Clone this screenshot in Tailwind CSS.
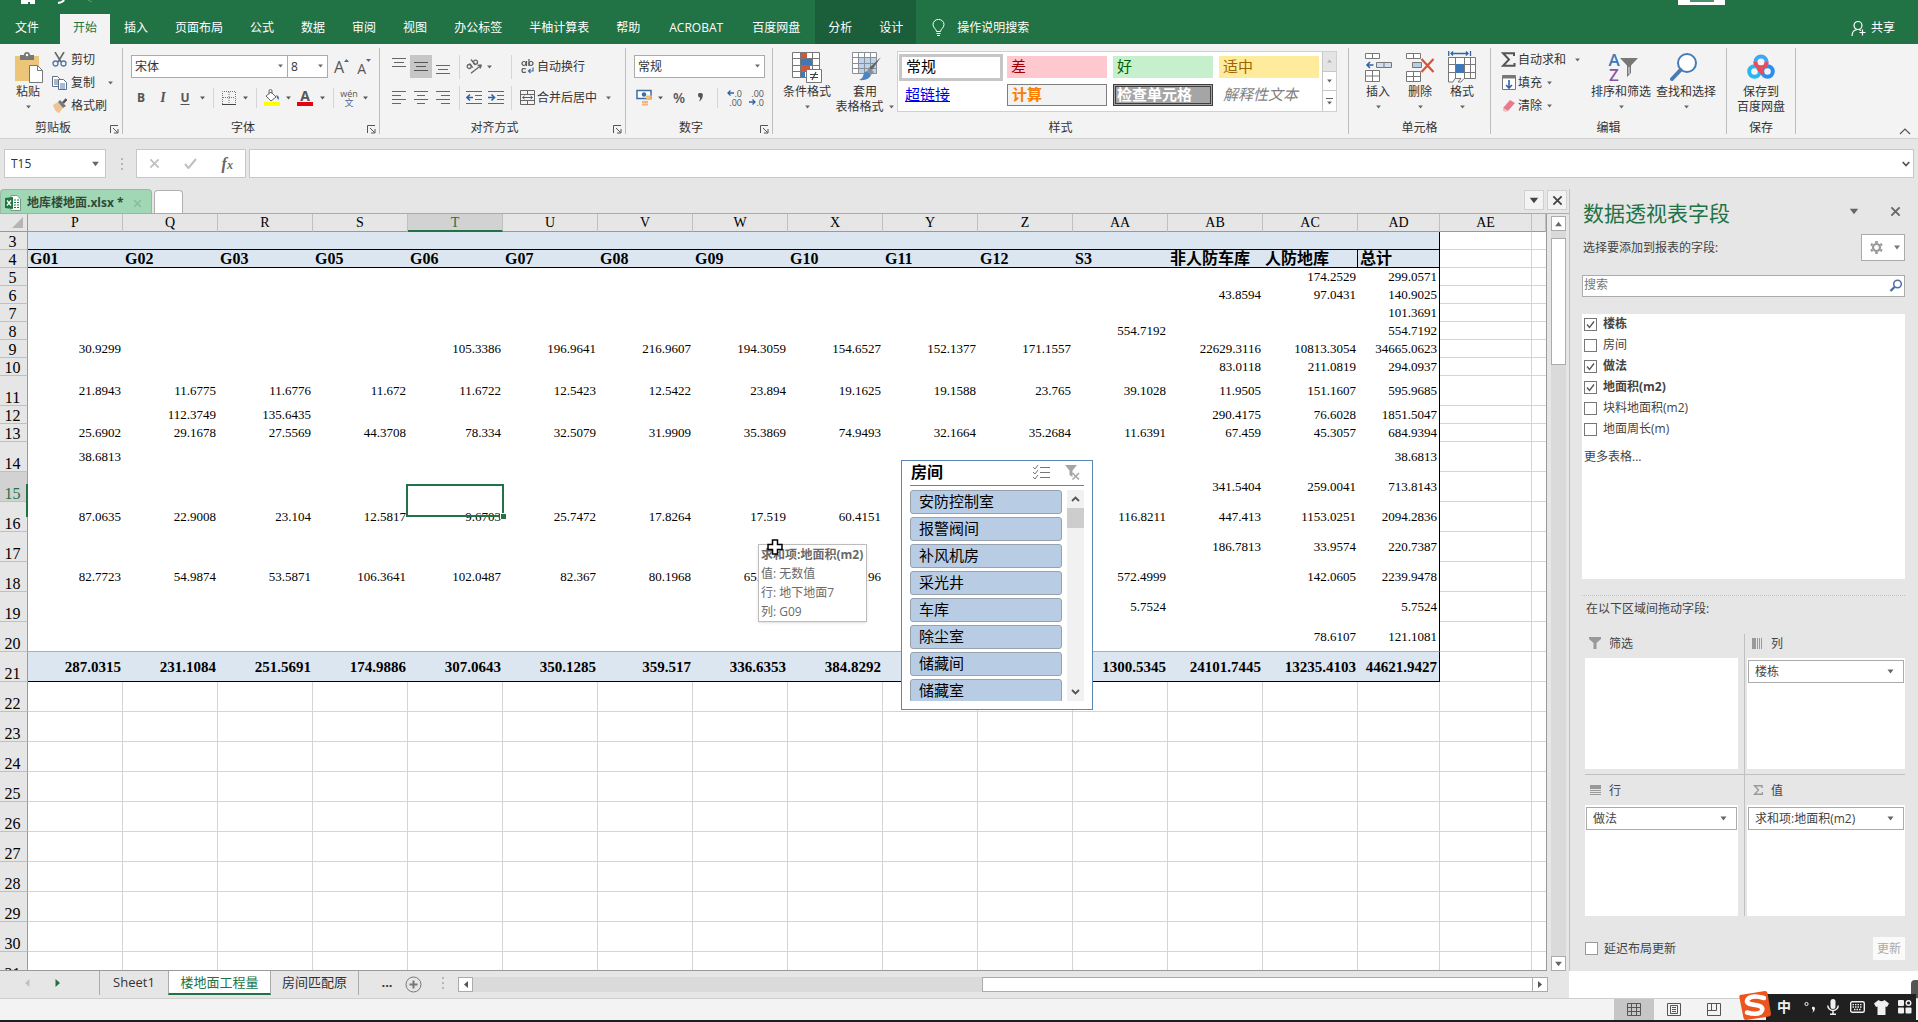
<!DOCTYPE html>
<html lang="zh-CN">
<head>
<meta charset="utf-8">
<meta name="viewport" content="width=device-width, initial-scale=1">
<title>地库楼地面.xlsx - Excel</title>
<script src="https://cdn.jsdelivr.net/npm/@tailwindcss/browser@4"></script>
</head>
<body class="flex h-screen flex-col overflow-hidden bg-[#e6e6e6] font-['Open_Sans','Noto_Sans_CJK_SC',sans-serif] text-xs leading-4 text-[#333]">

<!-- Shared symbols -->
<svg width="0" height="0" class="absolute" aria-hidden="true">
  <symbol id="caret" viewBox="0 0 8 5"><path d="M1 0.5h6L4 4.5z" fill="currentColor"/></symbol>
  <symbol id="launch" viewBox="0 0 9 9"><path d="M.5 8V.5H8M3 3l4.5 4.5M8 4v4H4" fill="none" stroke="#555"/></symbol>
  <symbol id="close" viewBox="0 0 12 12"><path d="M1.5 1.5l9 9M10.5 1.5l-9 9" fill="none" stroke="currentColor" stroke-width="2"/></symbol>
</svg>

<!-- Title strip and ribbon tabs -->
<header class="relative flex h-11 shrink-0 items-end overflow-hidden bg-[#217346] text-white">
  <svg class="absolute left-5 top-0" width="80" height="5" viewBox="0 0 80 5"><path d="M1 0h14v4H10V2H8v2H1z" fill="#fff"/><path d="M44 0q-1 2-6 3" stroke="#fff" stroke-width="2" fill="none"/><path d="M68 0l4 2" stroke="#5c9a78"/></svg>
  <div class="absolute right-[193px] top-0 h-[5px] w-[47px] overflow-hidden bg-white"><div class="mx-auto h-[2px] w-6 bg-[#4f8f6c]"></div></div>
  <nav class="flex h-[30px] gap-px whitespace-nowrap pl-[2px]">
    <button class="mr-[7px] px-[13px] pb-[2px]">文件</button>
    <button class="bg-[#f3f3f3] px-[13px] pb-[2px] text-[#217346]">开始</button>
    <button class="px-[13px] pb-[2px]">插入</button>
    <button class="px-[13px] pb-[2px]">页面布局</button>
    <button class="px-[13px] pb-[2px]">公式</button>
    <button class="px-[13px] pb-[2px]">数据</button>
    <button class="px-[13px] pb-[2px]">审阅</button>
    <button class="px-[13px] pb-[2px]">视图</button>
    <button class="px-[13px] pb-[2px]">办公标签</button>
    <button class="px-[13px] pb-[2px]">半柚计算表</button>
    <button class="px-[13px] pb-[2px]">帮助</button>
    <button class="w-[84px] pb-[2px]">ACROBAT</button>
    <button class="px-[13px] pb-[2px]">百度网盘</button>
  </nav>
  <div class="ml-[2px] flex h-11 items-end gap-px whitespace-nowrap bg-[#1b5e3a]">
    <button class="h-[30px] px-[13px] pb-[2px]">分析</button>
    <button class="h-[30px] px-[13px] pb-[2px]">设计</button>
  </div>
  <button class="ml-4 flex h-[30px] items-center gap-3 whitespace-nowrap pb-[2px]">
    <svg width="13" height="18" viewBox="0 0 13 18" fill="none" stroke="#fff"><path d="M4.500 12.500c0-2.500-3.500-3.500-3.500-7a5.400 5 0 0 1 11 0c0 3.500-3.500 4.500-3.500 7zM4.500 14.500h4M5 16.500h3"/></svg>
    操作说明搜索
  </button>
  <button class="ml-auto mr-[23px] flex h-[30px] items-center gap-1 whitespace-nowrap pb-[2px]">
    <svg width="16" height="17" viewBox="0 0 16 17" fill="none" stroke="#fff" stroke-width="1.200"><circle cx="7" cy="5.500" r="4"/><path d="M1 16c0-4 2-6 5-6.500M8 9.500l2 1M11.500 9.500v6M8.500 12.500h6"/></svg>
    共享
  </button>
</header>

<!-- Ribbon -->
<section class="relative flex h-[95px] shrink-0 whitespace-nowrap border-b border-[#cfcfcf] bg-[#f3f3f3] pt-1 text-[#333]">
  <!-- Clipboard -->
  <div class="relative mb-1 flex w-[123px] shrink-0 flex-col border-r border-[#bdbdbd]">
    <div class="flex h-[71px]">
      <button class="ml-1 flex w-12 flex-col items-center pt-[2px]">
        <span class="flex h-[34px] items-center"><svg width="29" height="33" viewBox="0 0 29 33"><path d="M1 5h24v25H1z" fill="#ecc578"/><path d="M6 4h4a3 3 0 0 1 6 0h4v5H6z" fill="#777"/><circle cx="13" cy="4" r="1.200" fill="#fff"/><path d="M15.500 14.500h8l5 5v12h-13z" fill="#fff" stroke="#777"/><path d="M23.500 14.500v5h5" fill="none" stroke="#777"/></svg></span>
        <span class="leading-[15px]">粘贴</span>
        <svg class="mt-[6px] text-[#666]" width="7" height="4"><use href="#caret"/></svg>
      </button>
      <div class="flex flex-col">
        <button class="flex h-[23px] items-center gap-1"><svg width="15" height="15" viewBox="0 0 15 15" fill="none"><path d="M3 0l6 10M12 0L6 10" stroke="#666" stroke-width="1.600"/><circle cx="3.500" cy="11.500" r="2.500" stroke="#4a78b0" stroke-width="1.300"/><circle cx="11.500" cy="11.500" r="2.500" stroke="#4a78b0" stroke-width="1.300"/></svg>剪切</button>
        <button class="flex h-[23px] items-center gap-1"><svg width="15" height="14" viewBox="0 0 15 14" fill="#fff" stroke="#5b6f8a"><path d="M.5.5h5l2 2v8h-7z"/><path d="M2 4h4M2 6h4M2 8h4"/><path d="M6.500 3.500h5l3 3v7h-8z"/><path d="M8 8h5M8 10h5M8 12h5" stroke="#4a78b0"/></svg>复制<svg class="ml-2 text-[#666]" width="7" height="4"><use href="#caret"/></svg></button>
        <button class="flex h-[23px] items-center gap-1"><svg width="15" height="15" viewBox="0 0 15 15"><path d="M1 7l5-3 5 6-4 5q-4-1-6-8z" fill="#ecc592"/><path d="M6 4l2-2 6 6-3 2z" fill="#777"/><path d="M11 5l3.500-4" stroke="#555" stroke-width="2.500"/></svg>格式刷</button>
      </div>
    </div>
    <div class="-mb-[2px] mt-auto pr-4 text-center">剪贴板</div>
    <svg class="absolute bottom-0 right-[3px]" width="9" height="9"><use href="#launch"/></svg>
  </div>

  <!-- Font -->
  <div class="relative mb-1 flex w-[257px] shrink-0 flex-col border-r border-[#bdbdbd]">
    <div class="flex h-[71px] flex-col gap-2 pt-[7px]">
      <div class="flex h-[23px] pl-2">
        <div class="relative"><select aria-label="字体" class="h-[23px] w-[157px] appearance-none border border-[#ababab] bg-white pl-[3px]"><option>宋体</option></select><svg class="pointer-events-none absolute right-1 top-[9px] text-[#666]" width="7" height="4"><use href="#caret"/></svg></div>
        <div class="relative"><select aria-label="字号" class="h-[23px] w-10 appearance-none border border-l-0 border-[#ababab] bg-white pl-[3px]"><option>8</option></select><svg class="pointer-events-none absolute right-1 top-[9px] text-[#666]" width="7" height="4"><use href="#caret"/></svg></div>
        <button class="ml-1.5 flex items-center text-base leading-none text-[#555]" aria-label="增大字号">A<svg class="-mt-3" width="5" height="3" viewBox="0 0 5 3"><path d="M0 3h5L2.500 0z" fill="#4a6a94"/></svg></button>
        <button class="ml-2 flex items-center pt-1 text-sm leading-none text-[#555]" aria-label="减小字号">A<svg class="-mt-4" width="5" height="3" viewBox="0 0 5 3"><path d="M0 0h5L2.500 3z" fill="#4a6a94"/></svg></button>
      </div>
      <div class="flex h-[23px] items-center pl-[7px] text-[#555]">
        <button class="w-[22px] font-bold">B</button>
        <button class="w-[22px] font-['Liberation_Serif',serif] text-sm font-bold italic">I</button>
        <button class="w-[22px] font-bold underline underline-offset-2">U</button>
        <span class="flex w-3 justify-center"><svg width="7" height="4"><use href="#caret"/></svg></span>
        <i class="mx-[5px] h-5 w-px bg-[#d5d5d5]"></i>
        <button class="flex w-5 justify-center" aria-label="边框"><svg width="14" height="14" viewBox="0 0 14 14" fill="none" stroke="#777" stroke-dasharray="1 1"><path d="M.5 13V.5h13V13M7 1v12M1 6.500h12"/><path d="M0 13.500h14" stroke="#444" stroke-dasharray="none"/></svg></button>
        <span class="flex w-3 justify-center"><svg width="7" height="4"><use href="#caret"/></svg></span>
        <i class="mx-[5px] h-5 w-px bg-[#d5d5d5]"></i>
        <button class="flex w-5 justify-center" aria-label="填充颜色"><svg width="16" height="17" viewBox="0 0 16 17"><path d="M2 7l5-4 5 5-5 4z" fill="#fff" stroke="#666"/><path d="M5 5V2a1.500 1.500 0 0 1 3 0v3" fill="none" stroke="#666"/><path d="M12 6q4 1 2.500 5Q13 10 12 6z" fill="#3f6ca6"/><path d="M0 13h16v4H0z" fill="#ff0"/></svg></button>
        <span class="flex w-3 justify-center"><svg width="7" height="4"><use href="#caret"/></svg></span>
        <button class="flex w-[22px] flex-col items-center" aria-label="字体颜色"><span class="text-sm font-bold leading-[13px]">A</span><span class="h-1 w-4 bg-[#e60012]"></span></button>
        <span class="flex w-3 justify-center"><svg width="7" height="4"><use href="#caret"/></svg></span>
        <i class="mx-[5px] h-5 w-px bg-[#d5d5d5]"></i>
        <button class="flex w-5 flex-col items-center text-[9px] leading-[9px]"><span>wén</span><span class="text-[#4a6fa8]">文</span></button>
        <span class="flex w-3 justify-center"><svg width="7" height="4"><use href="#caret"/></svg></span>
      </div>
    </div>
    <div class="-mb-[2px] mt-auto pr-4 text-center">字体</div>
    <svg class="absolute bottom-0 right-[3px]" width="9" height="9"><use href="#launch"/></svg>
  </div>

  <!-- Alignment -->
  <div class="relative mb-1 flex w-[246px] shrink-0 flex-col border-r border-[#bdbdbd]">
    <div class="flex h-[71px] flex-col gap-2 pt-[7px]">
      <div class="flex h-[23px] items-center pl-2">
        <button class="flex h-[23px] w-[22px] justify-center pt-[3px]" aria-label="顶端对齐"><svg width="14" height="9" viewBox="0 0 14 9" stroke="#666"><path d="M0 .5h14M2 4.500h10M0 8.500h14"/></svg></button>
        <button class="flex h-[23px] w-[22px] items-center justify-center bg-[#c6c6c6]" aria-label="垂直居中"><svg width="14" height="9" viewBox="0 0 14 9" stroke="#555"><path d="M0 .5h14M2 4.500h10M0 8.500h14"/></svg></button>
        <button class="flex h-[23px] w-[22px] items-end justify-center pb-1" aria-label="底端对齐"><svg width="14" height="9" viewBox="0 0 14 9" stroke="#666"><path d="M0 .5h14M2 4.500h10M0 8.500h14"/></svg></button>
        <i class="mx-[5px] h-6 w-px bg-[#d5d5d5]"></i>
        <button class="flex w-[18px] justify-center" aria-label="方向"><svg width="17" height="15" viewBox="0 0 17 15" fill="none" stroke="#666" stroke-width="1.300"><path d="M5 14.300L15.500 6M15.500 6l-4 .3M15.500 6l-1.500 3.600"/><circle cx="3.200" cy="7.500" r="2"/><path d="M3.500 4.500l3.300 4.200"/><path d="M5 .5l4.500 5.500"/><circle cx="9.500" cy="3.200" r="2"/></svg></button>
        <span class="flex w-3 justify-center text-[#666]"><svg width="7" height="4"><use href="#caret"/></svg></span>
        <i class="ml-4 mr-[5px] h-6 w-px bg-[#d5d5d5]"></i>
        <button class="flex items-center"><span class="flex w-5 justify-center"><svg width="13" height="15" viewBox="0 0 13 15" fill="none" stroke="#555" stroke-width="1.200"><circle cx="3" cy="4.500" r="2"/><path d="M5.500 2v5M8 0v7"/><circle cx="10" cy="4.500" r="2"/><path d="M5 10q-4-1.500-4 1.500T5 13"/><path d="M12 8.500v3.500H8M9.500 10l-2 2 2 2" stroke="#3f6ca6"/></svg></span>自动换行</button>
      </div>
      <div class="flex h-[23px] items-center pl-2">
        <button class="flex w-[22px] justify-center" aria-label="左对齐"><svg width="14" height="13" viewBox="0 0 14 13" stroke="#666"><path d="M0 .5h14M0 4.500h9M0 8.500h14M0 12.500h9"/></svg></button>
        <button class="flex w-[22px] justify-center" aria-label="居中"><svg width="14" height="13" viewBox="0 0 14 13" stroke="#666"><path d="M0 .5h14M3 4.500h8M0 8.500h14M3 12.500h8"/></svg></button>
        <button class="flex w-[22px] justify-center" aria-label="右对齐"><svg width="14" height="13" viewBox="0 0 14 13" stroke="#666"><path d="M0 .5h14M5 4.500h9M0 8.500h14M5 12.500h9"/></svg></button>
        <i class="mx-[5px] h-6 w-px bg-[#d5d5d5]"></i>
        <button class="flex w-[18px] justify-center" aria-label="减少缩进"><svg width="16" height="13" viewBox="0 0 16 13" stroke="#666" fill="none"><path d="M0 .5h16M9 4.500h7M9 8.500h7M0 12.500h16"/><path d="M7 6.500H1M4 3.500l-3 3 3 3" stroke="#2f65a8" stroke-width="1.600"/></svg></button>
        <button class="ml-1 flex w-[18px] justify-center" aria-label="增加缩进"><svg width="16" height="13" viewBox="0 0 16 13" stroke="#666" fill="none"><path d="M0 .5h16M9 4.500h7M9 8.500h7M0 12.500h16"/><path d="M0 6.500h6M3.500 3.500l3 3-3 3" stroke="#2f65a8" stroke-width="1.600"/></svg></button>
        <i class="ml-1.5 mr-[5px] h-6 w-px bg-[#d5d5d5]"></i>
        <button class="flex items-center"><span class="flex w-5 justify-center"><svg width="15" height="15" viewBox="0 0 15 15" fill="none" stroke="#666"><path d="M.5.5h14v14H.5zM.5 4.500h14M.5 10.500h14M7.500.5v4M7.500 10.500v4"/><path d="M2.500 7.500h10M4.500 5.800L2.500 7.500l2 1.700M10.500 5.800l2 1.700-2 1.700" stroke="#2f65a8"/></svg></span>合并后居中<svg class="ml-2 text-[#666]" width="7" height="4"><use href="#caret"/></svg></button>
      </div>
    </div>
    <div class="-mb-[2px] mt-auto pr-4 text-center">对齐方式</div>
    <svg class="absolute bottom-0 right-[3px]" width="9" height="9"><use href="#launch"/></svg>
  </div>

  <!-- Number -->
  <div class="relative mb-1 flex w-[147px] shrink-0 flex-col border-r border-[#bdbdbd]">
    <div class="flex h-[71px] flex-col gap-2 pt-[7px]">
      <div class="relative ml-2 w-[131px]"><select aria-label="数字格式" class="h-[23px] w-full appearance-none border border-[#ababab] bg-white pl-[3px]"><option>常规</option></select><svg class="pointer-events-none absolute right-1 top-[9px] text-[#666]" width="7" height="4"><use href="#caret"/></svg></div>
      <div class="flex h-[23px] items-center pl-[10px] text-[#555]">
        <button class="w-[18px]" aria-label="会计数字格式"><svg width="18" height="17" viewBox="0 0 18 17"><path d="M1 1.500h14v8H1z" fill="#fff" stroke="#3f6ca6" stroke-width="1.500"/><circle cx="8" cy="5.500" r="2.200" fill="#3f6ca6"/><path d="M10 7.500h6M10 10h6M6 13h6M6 15.500h6" stroke="#edb77a" stroke-width="2"/></svg></button>
        <span class="flex w-3 justify-center"><svg width="7" height="4"><use href="#caret"/></svg></span>
        <button class="ml-1 w-[18px] text-sm font-semibold">%</button>
        <button class="ml-1 flex w-[17px] justify-center" aria-label="千位分隔样式"><svg width="5" height="9" viewBox="0 0 5 9"><path d="M0 1.500a2.300 2 0 0 1 4.800 1Q4.500 6.500 1 8.500 2.500 6 2 4.500 0 4.500 0 1.500z" fill="#555"/></svg></button>
        <i class="ml-2 mr-1.5 h-5 w-px bg-[#d5d5d5]"></i>
        <button class="flex w-[18px] flex-col text-[9px] leading-[9px]" aria-label="增加小数位数"><span class="flex items-center justify-end"><svg width="7" height="6" viewBox="0 0 7 6"><path d="M7 3H1M3.500.5L1 3l2.500 2.500" stroke="#2f65a8" fill="none" stroke-width="1.300"/></svg>.0</span><span class="text-right">.00</span></button>
        <button class="ml-1 flex w-[18px] flex-col text-[9px] leading-[9px]" aria-label="减少小数位数"><span class="text-right">.00</span><span class="flex items-center justify-end"><svg width="7" height="6" viewBox="0 0 7 6"><path d="M0 3h6M3.500.5L6 3 3.500 5.500" stroke="#2f65a8" fill="none" stroke-width="1.300"/></svg>.0</span></button>
      </div>
    </div>
    <div class="-mb-[2px] mt-auto pr-4 text-center">数字</div>
    <svg class="absolute bottom-0 right-[3px]" width="9" height="9"><use href="#launch"/></svg>
  </div>

  <!-- Styles -->
  <div class="mb-1 flex w-[576px] shrink-0 flex-col border-r border-[#bdbdbd]">
    <div class="flex h-[71px] pl-[6px]">
      <button class="flex w-14 flex-col items-center pt-[2px] leading-[15px]">
        <span class="flex h-[34px] items-center"><svg width="30" height="31" viewBox="0 0 30 31"><path d="M.5.5h27v25H.5zM8.500.5v25M20.500.5v25M.5 6.500h27M.5 13.500h27M.5 19.500h27" fill="#fff" stroke="#777"/><path d="M9 1h6v5H9zM9 14h9v5H9z" fill="#d4553a"/><path d="M9 7h11v6H9zM9 20h4v5H9z" fill="#3f78b8"/><path d="M14.500 17.500h15v13h-15z" fill="#fff" stroke="#777"/><path d="M18 22.500h8M18 25.500h8M24 20l-4 8" stroke="#444" stroke-width="1.200"/></svg></span>
        条件格式
        <svg class="mt-[6px] text-[#666]" width="7" height="4"><use href="#caret"/></svg>
      </button>
      <button class="flex w-[60px] flex-col items-center pt-[2px] leading-[15px]">
        <span class="flex h-[34px] items-center pl-1"><svg width="30" height="30" viewBox="0 0 30 30"><path d="M.5.5h24v21H.5z" fill="#fff"/><path d="M7 6h18v16H7z" fill="#bcd3ea"/><path d="M.5.5h24v21H.5zM6.500.5v21M12.500.5v21M18.500.5v21M.5 5.500h24M.5 11.500h24M.5 16.500h24" fill="none" stroke="#8a8f96"/><path d="M29 5l-9 13-3-2z" fill="#666"/><path d="M17 16l5 4-3 3-4-4z" fill="#8a8f96"/><path d="M15 19l4 4q-2 6-12 5 4-2 4-4 1-4 4-5z" fill="#4a86c5"/></svg></span>
        <span>套用</span>
        <span class="flex items-center gap-1">表格格式<svg class="text-[#666]" width="7" height="4"><use href="#caret"/></svg></span>
      </button>
      <div class="ml-[2px] mt-[3px] flex h-[61px] w-[440px] border border-[#d0d0d0] bg-white text-[15px] leading-5">
        <div class="grid flex-1 auto-rows-[28px] grid-cols-4 items-center pt-px text-left">
          <button class="mx-px flex h-[27px] items-center border-[3px] border-[#c6c6c6] pb-[3px] pl-1 text-black">常规</button>
          <button class="mx-[3px] flex h-[22px] items-center bg-[#ffc7ce] pb-[3px] pl-1 text-[#9c0006]">差</button>
          <button class="mx-[3px] flex h-[22px] items-center bg-[#c6efce] pb-[3px] pl-1 text-[#006100]">好</button>
          <button class="mx-[3px] flex h-[22px] items-center bg-[#ffeb9c] pb-[3px] pl-1 text-[#9c6500]">适中</button>
          <button class="mx-[3px] flex h-[22px] items-center pb-[3px] pl-1 text-[#0000ee] underline">超链接</button>
          <button class="mx-[3px] flex h-[22px] items-center border border-[#7f7f7f] bg-[#f2f2f2] pb-[3px] pl-1 font-bold text-[#fa7d00]">计算</button>
          <button class="mx-[3px] flex h-[22px] items-center border-[3px] border-double border-[#3f3f3f] bg-[#a5a5a5] pb-[3px] pl-px font-bold text-white">检查单元格</button>
          <button class="mx-[3px] flex h-[22px] items-center pb-[3px] pl-1 italic text-[#7f7f7f]">解释性文本</button>
        </div>
        <div class="grid w-[14px] grid-rows-3 divide-y divide-[#c6c6c6] border-l border-[#c6c6c6] text-[#666]">
          <button class="flex items-center justify-center bg-[#e4e4e4] text-[#b0b0b0]" aria-label="上一行"><svg class="rotate-180" width="7" height="4"><use href="#caret"/></svg></button>
          <button class="flex items-center justify-center" aria-label="下一行"><svg width="7" height="4"><use href="#caret"/></svg></button>
          <button class="flex flex-col items-center justify-center gap-0.5" aria-label="其他"><i class="h-px w-[7px] bg-[#666]"></i><svg width="7" height="4"><use href="#caret"/></svg></button>
        </div>
      </div>
    </div>
    <div class="-mb-[2px] mt-auto text-center">样式</div>
  </div>

  <!-- Cells -->
  <div class="mb-1 flex w-[142px] shrink-0 flex-col border-r border-[#bdbdbd]">
    <div class="flex h-[71px] pl-2 leading-[15px]">
      <button class="flex w-[42px] flex-col items-center pt-[2px]">
        <span class="flex h-[34px] items-center"><svg width="27" height="29" viewBox="0 0 27 29" fill="#fff" stroke="#777"><path d="M.5.5h14v5H.5zM7.500.5v5M.5 17.500h14v11H.5zM7.500 17.500v11M.5 23h14"/><path d="M11.500 9.500h15v5h-15zM19 9.500v5" fill="#cfdfee"/><path d="M8.500 12H2M5 9l-3 3 3 3" fill="none" stroke="#2f65a8" stroke-width="1.600"/></svg></span>
        插入<svg class="mt-[6px] text-[#666]" width="7" height="4"><use href="#caret"/></svg>
      </button>
      <button class="flex w-[42px] flex-col items-center pt-[2px]">
        <span class="flex h-[34px] items-center"><svg width="29" height="29" viewBox="0 0 29 29" fill="#fff" stroke="#777"><path d="M.5.5h14v5H.5zM7.500.5v5M.5 18.500h14v10H.5zM7.500 18.500v10M.5 23.500h14"/><path d="M6.500 9.500h9v5h-9z" fill="#b7cfe6"/><path d="M15.500 6l12 13M27.500 6l-12 13" fill="none" stroke="#d4553a" stroke-width="2.200"/></svg></span>
        删除<svg class="mt-[6px] text-[#666]" width="7" height="4"><use href="#caret"/></svg>
      </button>
      <button class="flex w-[42px] flex-col items-center pt-[2px]">
        <span class="flex h-[34px] items-center"><svg width="28" height="32" viewBox="0 0 28 32" fill="#fff" stroke="#777"><path d="M.5 6.500h27v21H16l-3 3.500h-3l3-3.500H7l-2 3.500H.5z"/><path d="M7.500 6.500v21M16.500 6.500v21M22.500 6.500v21M.5 13.500h27M.5 21.500h27"/><path d="M8 13h8v9H8z" fill="#3f78b8" stroke="none"/><path d="M.7 0v5M22.500 0v5M3 2.500h17M5 .5l-2 2 2 2M18 .5l2 2-2 2" fill="none" stroke="#2f65a8" stroke-width="1.300"/></svg></span>
        格式<svg class="mt-[6px] text-[#666]" width="7" height="4"><use href="#caret"/></svg>
      </button>
    </div>
    <div class="-mb-[2px] mt-auto text-center">单元格</div>
  </div>

  <!-- Editing -->
  <div class="mb-1 flex w-[236px] shrink-0 flex-col border-r border-[#bdbdbd]">
    <div class="flex h-[71px] pl-2 leading-[15px]">
      <div class="flex w-[90px] flex-col">
        <button class="flex h-[23px] items-center"><span class="flex w-[19px] justify-center"><svg width="15" height="15" viewBox="0 0 15 15"><path d="M13 4V1.200H2L8 7.500 2 13.800h11.500V11" fill="none" stroke="#555" stroke-width="2"/></svg></span>自动求和<svg class="ml-2 text-[#666]" width="7" height="4"><use href="#caret"/></svg></button>
        <button class="flex h-[23px] items-center"><span class="flex w-[19px] justify-center"><svg width="14" height="15" viewBox="0 0 14 15" fill="#fff" stroke="#777"><path d="M.5.5h13v14H.5z"/><path d="M1 2h12" stroke-width="3"/><path d="M7 5v8M4 10l3 3 3-3" fill="none" stroke="#2f65a8" stroke-width="1.600"/></svg></span>填充<svg class="ml-1 text-[#666]" width="7" height="4"><use href="#caret"/></svg></button>
        <button class="flex h-[23px] items-center"><span class="flex w-[19px] justify-center"><svg width="14" height="14" viewBox="0 0 14 14"><path d="M1 9L8 1l5 3-7 8z" fill="#e87a8c"/><path d="M1 9l5 3-2 1-3-1z" fill="#f6bcc6"/></svg></span>清除<svg class="ml-1 text-[#666]" width="7" height="4"><use href="#caret"/></svg></button>
      </div>
      <button class="flex w-16 flex-col items-center pt-[2px]">
        <span class="flex h-[34px] items-center pl-1 text-[17px] font-semibold leading-[15px]"><span class="flex flex-col"><span class="text-[#3f78b8]">A</span><span class="text-[#8a55a8]">Z</span></span><svg width="18" height="20" viewBox="0 0 18 20"><path d="M0 1h18l-7 7.500V16l-4 4V8.500z" fill="#777"/><path d="M9 10v7" stroke="#f3f3f3"/></svg></span>
        排序和筛选<svg class="mt-[6px] text-[#666]" width="7" height="4"><use href="#caret"/></svg>
      </button>
      <button class="flex w-[66px] flex-col items-center pt-[2px]">
        <span class="flex h-[34px] items-center pr-1"><svg width="28" height="28" viewBox="0 0 28 28"><circle cx="17" cy="10" r="9" fill="#fff" stroke="#4a7ab5" stroke-width="2"/><path d="M10.500 17L2 26" stroke="#4a7ab5" stroke-width="4" stroke-linecap="round"/></svg></span>
        查找和选择<svg class="mt-[6px] text-[#666]" width="7" height="4"><use href="#caret"/></svg>
      </button>
    </div>
    <div class="-mb-[2px] mt-auto text-center">编辑</div>
  </div>

  <!-- Save -->
  <div class="mb-1 flex w-[69px] shrink-0 flex-col border-r border-[#bdbdbd]">
    <button class="flex h-[71px] flex-col items-center pt-[2px] leading-[15px]">
      <span class="flex h-[34px] items-center"><svg width="28" height="26" viewBox="0 0 28 26" fill="none" stroke-width="4"><circle cx="7.500" cy="17.500" r="5.300" stroke="#2ab7f0"/><circle cx="20.500" cy="17.500" r="5.300" stroke="#2a8df0"/><circle cx="14" cy="8" r="5.600" stroke="#3fa6f4"/><path d="M8.400 8a5.600 5.600 0 0 0 5.600 5.600A5.600 5.600 0 0 0 19.600 8M11 14l5 6" stroke="#ee4a5c"/></svg></span>
      <span>保存到</span><span>百度网盘</span>
    </button>
    <div class="-mb-[2px] mt-auto text-center">保存</div>
  </div>
  <button class="absolute bottom-[3px] right-[7px]" aria-label="折叠功能区"><svg width="12" height="7" viewBox="0 0 12 7"><path d="M1 6l5-5 5 5" fill="none" stroke="#555" stroke-width="1.200"/></svg></button>
</section>

<!-- Formula bar -->
<section class="flex h-[50px] shrink-0 items-start px-[4px] pt-[10px]">
  <div class="relative"><input aria-label="名称框" value="T15" class="h-[29px] w-[102px] border border-[#c8c8c8] bg-white pl-1.5"><svg class="absolute right-[6px] top-3 text-[#666]" width="9" height="6"><use href="#caret"/></svg></div>
  <div class="ml-[14px] flex h-[29px] w-[3px] flex-col items-center justify-center gap-[3px]"><i class="size-[2px] bg-[#b5b5b5]"></i><i class="size-[2px] bg-[#b5b5b5]"></i><i class="size-[2px] bg-[#b5b5b5]"></i></div>
  <div class="ml-[13px] flex h-[29px] w-[110px] items-center justify-around border border-[#c8c8c8] bg-white">
    <button class="text-[#c0c0c0]" aria-label="取消"><svg width="11" height="11"><use href="#close"/></svg></button>
    <button aria-label="输入"><svg width="13" height="11" viewBox="0 0 13 11"><path d="M1 6l3.500 4L12 1" fill="none" stroke="#c0c0c0" stroke-width="2"/></svg></button>
    <button class="font-['Liberation_Serif',serif] text-base font-bold italic text-[#666]">f<span class="text-xs">x</span></button>
  </div>
  <div class="relative ml-[3px] flex-1"><input aria-label="编辑栏" class="h-[29px] w-full border border-[#c8c8c8] bg-white px-1"><svg class="absolute right-1 top-3" width="8" height="6" viewBox="0 0 8 6"><path d="M.7 1L4 4.500 7.300 1" fill="none" stroke="#555" stroke-width="1.800"/></svg></div>
</section>

<main class="flex min-h-0 flex-1">
  <div class="flex min-w-0 flex-1 flex-col">
    <!-- Workbook tabs -->
    <div class="flex h-6 shrink-0 items-end">
      <button class="flex h-6 w-[152px] items-center rounded-t-[4px] border border-b-0 border-[#9bb8a6] bg-[#a0d8b6] pl-1 pt-[3px] font-bold text-[#2f4a3a]">
        <svg class="mr-1.5" width="16" height="16" viewBox="0 0 16 16"><path d="M6 .5h6l3.500 3.500v11.500H6z" fill="#fff" stroke="#7a9a88"/><path d="M9 5h5M9 7.500h5M9 10h5M9 12.500h5" stroke="#217346" stroke-dasharray="2 1"/><path d="M0 3l8-1v12l-8-1z" fill="#217346"/><path d="M2 5.500l4 5M6 5.500l-4 5" stroke="#fff" stroke-width="1.300"/></svg>
        地库楼地面.xlsx *<svg class="ml-[9px] text-[#8dbb9f]" width="9" height="9"><use href="#close"/></svg>
      </button>
      <button class="ml-[2px] h-[23px] w-[29px] rounded-t-[4px] border border-b-0 border-[#b0b0b0] bg-white" aria-label="新建标签"></button>
      <button class="mb-[3px] ml-auto flex h-5 w-5 items-center justify-center border border-[#d0d0d0] bg-[#f3f3f3] text-[#444]" aria-label="标签列表"><svg width="12" height="7"><use href="#caret"/></svg></button>
      <button class="mb-[3px] ml-[3px] mr-[2px] flex h-5 w-5 items-center justify-center border border-[#d0d0d0] bg-[#f3f3f3] text-[#444]" aria-label="关闭"><svg width="11" height="11"><use href="#close"/></svg></button>
    </div>

    <!-- Sheet -->
    <div class="flex min-h-0 flex-1 border-t border-[#ababab]">
      <div class="relative min-w-0 flex-1 overflow-hidden border-b border-r border-[#9a9a9a] bg-white">
        <table class="w-full min-w-[1546px] table-fixed border-separate border-spacing-0 bg-white font-['Liberation_Serif','Noto_Sans_CJK_SC',serif] text-black">
          <colgroup id="cols"></colgroup>
          <thead><tr id="head" class="h-[18px]"></tr></thead>
          <tbody id="grid"></tbody>
        </table>

        <!-- Active cell -->
        <div class="absolute left-[406px] top-[270px] h-[33px] w-[98px] border-2 border-[#217346]"><i class="absolute -bottom-[4px] -right-[4px] size-[6px] border-l border-t border-white bg-[#217346]"></i></div>
        <i class="absolute left-[26px] top-[270px] h-[33px] w-[2px] bg-[#217346]"></i>

        <!-- Cell tooltip -->
        <div class="absolute left-[758px] top-[330px] whitespace-nowrap border border-[#bdbdbd] bg-white pl-[2px] pr-[3px] leading-[19px] text-[#6a6a6a] shadow-sm">
          <div class="font-bold">求和项:地面积(m2)</div><div>值: 无数值</div><div>行: 地下地面7</div><div>列: G09</div>
        </div>
        <svg class="absolute left-[767px] top-[325px]" width="16" height="16" viewBox="0 0 16 16"><path d="M5.500 1h5v4.500H15v5h-4.500V15h-5v-4.500H1v-5h4.500z" fill="#fff" stroke="#000" stroke-width="1.500"/></svg>

        <!-- Slicer -->
        <div class="absolute left-[901px] top-[246px] h-[250px] w-[192px] border border-[#5b86b5] bg-white px-2 text-[15px] text-black">
          <div class="flex h-[25px] items-center border-b border-[#5b86b5] pb-[2px] pl-px text-base font-bold">
            <span>房间</span>
            <svg class="ml-auto" width="17" height="15" viewBox="0 0 17 15" fill="none" stroke="#777"><path d="M7 2.500h10M7 7.500h10M7 12.500h10"/><path d="M0 2l2 2 3-4M0 7l2 2 3-4M0 12l2 2 3-4"/></svg>
            <svg class="ml-[15px] mr-1" width="15" height="15" viewBox="0 0 15 15"><path d="M0 0h12L7.500 5.500V12L4.500 10V5.500z" fill="#a5a5a5"/><path d="M7.500 8l6.500 6.500M14 8l-6.500 6.500" stroke="#a5a5a5" stroke-width="1.500"/></svg>
          </div>
          <div class="mt-1 flex h-[211px] justify-between">
            <div id="slicer" class="flex w-[152px] flex-col gap-[3px] overflow-hidden"></div>
            <div class="flex w-[17px] flex-col items-center bg-[#f1f1f1]">
              <svg class="mt-1.5 shrink-0" width="9" height="6" viewBox="0 0 9 6"><path d="M1 5l3.500-3.500L8 5" fill="none" stroke="#555" stroke-width="1.800"/></svg>
              <i class="mt-1.5 h-5 w-full shrink-0 bg-[#cdcdcd]"></i>
              <svg class="mb-1.5 mt-auto shrink-0" width="9" height="6" viewBox="0 0 9 6"><path d="M1 1l3.500 3.500L8 1" fill="none" stroke="#555" stroke-width="1.800"/></svg>
            </div>
          </div>
        </div>
      </div>
      <!-- Vertical scroll bar -->
      <div class="flex w-[22px] flex-col items-center pt-[2px] text-[#666]">
        <button class="flex h-[15px] w-[15px] shrink-0 items-center justify-center border border-[#ababab] bg-white" aria-label="向上"><svg class="rotate-180" width="9" height="6"><use href="#caret"/></svg></button>
        <div class="w-[15px] flex-1 bg-[#dadada] pt-[7px]"><div class="h-[127px] border border-[#ababab] bg-white"></div></div>
        <button class="flex h-[15px] w-[15px] shrink-0 items-center justify-center border border-[#ababab] bg-white" aria-label="向下"><svg width="9" height="6"><use href="#caret"/></svg></button>
      </div>
    </div>

    <!-- Sheet tabs -->
    <div class="flex h-[27px] shrink-0 items-start text-[13px] leading-[22px]">
      <button class="ml-[25px] mt-2" aria-label="上一个"><svg width="5" height="8" viewBox="0 0 5 8"><path d="M4.500 0v8L0 4z" fill="#c0c0c0"/></svg></button>
      <button class="ml-[25px] mt-2" aria-label="下一个"><svg width="5" height="8" viewBox="0 0 5 8"><path d="M.5 0v8L5 4z" fill="#217346"/></svg></button>
      <button class="ml-[39px] h-6 w-[69px] border-l border-[#ababab] pb-[2px] text-center">Sheet1</button>
      <button class="-mt-px h-[25px] w-[103px] border-x border-b-2 border-x-[#ababab] border-b-[#217346] bg-white text-[#217346]">楼地面工程量</button>
      <button class="h-6 w-[88px] border-r border-[#ababab] pb-[2px]">房间匹配原</button>
      <button class="ml-[22px] w-3 font-bold" aria-label="更多工作表">...</button>
      <button class="ml-[12px] mt-[5px]" aria-label="新工作表"><svg width="17" height="17" viewBox="0 0 17 17" fill="none" stroke="#777"><circle cx="8.500" cy="8.500" r="7.500"/><path d="M4.500 8.500h8M8.500 4.500v8" stroke-width="2"/></svg></button>
      <div class="ml-5 mt-[6px] flex flex-col gap-[3px]"><i class="size-[2px] bg-[#b5b5b5]"></i><i class="size-[2px] bg-[#b5b5b5]"></i><i class="size-[2px] bg-[#b5b5b5]"></i></div>
      <div class="ml-[14px] mr-[21px] mt-[6px] flex h-[15px] flex-1">
        <button class="flex w-[15px] items-center justify-center border border-[#ababab] bg-white" aria-label="向左"><svg width="4" height="7" viewBox="0 0 4 7"><path d="M4 0v7L0 3.500z" fill="#555"/></svg></button>
        <div class="flex flex-1 justify-end bg-[#dadada]"><div class="h-full w-[52%] border border-[#ababab] bg-white"></div></div>
        <button class="flex w-[15px] items-center justify-center border border-l-0 border-[#ababab] bg-white" aria-label="向右"><svg width="4" height="7" viewBox="0 0 4 7"><path d="M0 0v7l4-3.500z" fill="#555"/></svg></button>
      </div>
    </div>
  </div>

  <!-- PivotTable fields pane -->
  <aside class="flex w-[349px] shrink-0 flex-col">
    <div class="flex min-h-0 flex-1 flex-col border-l border-[#c0c0c0] pl-3 pr-[13px] text-[#444]">
      <div class="mt-[9px] flex h-[30px] shrink-0 items-center">
        <h2 class="pl-px text-[21px] leading-[30px] text-[#217346]">数据透视表字段</h2>
        <svg class="-mt-1 ml-auto text-[#666]" width="12" height="7"><use href="#caret"/></svg>
        <button class="-mt-1 ml-[30px] mr-1 text-[#666]" aria-label="关闭窗格"><svg width="11" height="11"><use href="#close"/></svg></button>
      </div>
      <div class="mt-[6px] flex h-[27px] shrink-0 items-center justify-between">
        <span class="pl-px">选择要添加到报表的字段:</span>
        <button class="flex h-[27px] w-11 items-center justify-center gap-2.5 border border-[#ababab] bg-white pl-1 text-[#777]" aria-label="工具"><svg width="13" height="13" viewBox="0 0 13 13" fill="none" stroke="#999"><circle cx="6.500" cy="6.500" r="3.500" stroke-width="2.200"/><path d="M6.500 0v2M6.500 11v2M0.900 3.200l1.700 1M10.400 8.800l1.700 1M.9 9.800l1.700-1M10.400 4.200l1.700-1" stroke-width="2.600"/></svg><svg width="8" height="5"><use href="#caret"/></svg></button>
      </div>
      <div class="relative mt-[14px] shrink-0"><input aria-label="搜索" placeholder="搜索" class="block h-[22px] w-full border border-[#ababab] bg-white pb-[3px] pl-px placeholder:text-[#777]"><svg class="absolute right-[2px] top-1" width="14" height="14" viewBox="0 0 14 14" fill="none" stroke="#4a6fa8"><circle cx="8.500" cy="5" r="3.800" stroke-width="1.500"/><path d="M5.500 8L1.500 12" stroke-width="2.400"/></svg></div>
      <div id="fields" class="mt-[17px] min-h-0 flex-1 overflow-hidden bg-white pl-[2px] pt-px"></div>
      <hr class="mt-4 shrink-0 border-dotted border-[#c0c0c0]">
      <div class="mt-[5px] shrink-0 pl-1">在以下区域间拖动字段:</div>
      <div class="ml-[3px] mt-[17px] grid shrink-0 grid-cols-2">
        <section class="flex h-[141px] flex-col border-b border-r border-[#c0c0c0] pr-1.5">
          <h3 class="flex h-6 items-center gap-2 pb-1 pl-1"><svg class="-mt-[2px]" width="12" height="12" viewBox="0 0 12 12"><path d="M0 0h12v2L7.500 6v6h-3V6L0 2z" fill="#999"/></svg>筛选</h3>
          <div class="h-[111px] bg-white"></div>
        </section>
        <section class="flex h-[141px] flex-col border-b border-[#c0c0c0] pl-[2px]">
          <h3 class="flex h-6 items-center gap-[9px] pb-1 pl-[5px]"><svg class="-mt-[2px]" width="10" height="11" viewBox="0 0 10 11"><path d="M0 0h4v11H0zM5 0h1v11H5zM7 0h1v11H7zM9 0h1v11H9z" fill="#999"/></svg>列</h3>
          <div class="h-[111px] bg-white px-px pt-[2px]"><div class="relative"><select aria-label="列字段" class="block h-[23px] w-full appearance-none border border-[#ababab] bg-white pl-1.5"><option>楼栋</option></select><svg class="pointer-events-none absolute right-[9px] top-[9px] text-[#666]" width="9" height="5"><use href="#caret"/></svg></div></div>
        </section>
        <section class="flex h-[141px] flex-col border-r border-[#c0c0c0] pr-1.5 pt-[6px]">
          <h3 class="flex h-6 items-center gap-2 pb-1 pl-[5px]"><svg class="-mt-[2px]" width="11" height="10" viewBox="0 0 11 10"><path d="M0 0h11v4H0zM0 5h11v1H0zM0 7h11v1H0zM0 9h11v1H0z" fill="#999"/></svg>行</h3>
          <div class="h-[111px] bg-white px-px pt-[2px]"><div class="relative"><select aria-label="行字段" class="block h-[23px] w-full appearance-none border border-[#ababab] bg-white pl-1.5"><option>做法</option></select><svg class="pointer-events-none absolute right-[9px] top-[9px] text-[#666]" width="9" height="5"><use href="#caret"/></svg></div></div>
        </section>
        <section class="flex h-[141px] flex-col pl-[2px] pt-[6px]">
          <h3 class="flex h-6 items-center gap-2 pb-1 pl-1.5"><svg class="-mt-[2px]" width="10" height="10" viewBox="0 0 10 10"><path d="M9 3V.7H1.500L5.500 5l-4 4.300H9.500V7" fill="none" stroke="#999" stroke-width="1.400"/></svg>值</h3>
          <div class="h-[111px] bg-white px-px pt-[2px]"><div class="relative"><select aria-label="值字段" class="block h-[23px] w-full appearance-none border border-[#ababab] bg-white pl-1.5"><option>求和项:地面积(m2)</option></select><svg class="pointer-events-none absolute right-[9px] top-[9px] text-[#666]" width="9" height="5"><use href="#caret"/></svg></div></div>
        </section>
      </div>
      <div class="mb-[11px] mt-[21px] flex h-[23px] shrink-0 items-center justify-between pl-[3px]">
        <label class="flex items-center gap-1.5"><input type="checkbox" class="size-[13px] appearance-none border border-[#999] bg-white">延迟布局更新</label>
        <button class="h-[23px] w-8 bg-[#fafafa] text-[#aaa]" disabled>更新</button>
      </div>
    </div>
    <div class="flex h-[27px] shrink-0 items-end justify-end bg-white"><i class="h-[18px] w-[7px] rounded-tl-[4px] bg-[#555]"></i></div>
  </aside>
</main>

<!-- Status bar -->
<footer class="relative flex h-6 shrink-0 items-stretch justify-end border-b-2 border-t border-b-[#1c1c22] border-t-[#cfcfcf] bg-[#f3f3f3] pr-[177px]">
  <button class="flex w-10 items-center justify-center bg-[#c6c6c6]" aria-label="普通"><svg width="14" height="13" viewBox="0 0 14 13" fill="none" stroke="#555"><path d="M.5.5h13v12H.5zM4.500.5v12M9.500.5v12M.5 4.500h13M.5 8.500h13"/></svg></button>
  <button class="flex w-10 items-center justify-center" aria-label="页面布局"><svg width="14" height="13" viewBox="0 0 14 13" fill="none" stroke="#555"><path d="M.5.5h13v12H.5zM3.500 2.500h7v8h-7zM5 4.500h4M5 6.500h4M5 8.500h4"/></svg></button>
  <button class="mr-[7px] flex w-10 items-center justify-center" aria-label="分页预览"><svg width="14" height="13" viewBox="0 0 14 13" fill="none" stroke="#555"><path d="M.5.5h13v12H.5zM4.500.5v7M9.500.5v7M.5 7.500h9"/></svg></button>

  <!-- Input method bar -->
  <div class="absolute -bottom-[2px] right-[2px] flex h-7 w-[150px] items-center gap-[13px] bg-[#202020] pb-[2px] pl-[11px] text-[#f0f0f0]">
    <svg class="absolute -left-[28px] -top-1" width="34" height="30" viewBox="0 0 34 30"><path d="M2 5L27 1q2 0 2.500 2L33 24q0 2-2 2.500L8 30q-2 0-2.500-2L1.500 8Q1 6 2 5z" fill="#ea5520"/><path d="M26 8Q14 4.500 10 9t7 6 5.500 7.500Q18 25 9 22.500" fill="none" stroke="#fff" stroke-width="4.500" stroke-linecap="round"/></svg>
    <span class="w-[14px] text-sm font-bold leading-none">中</span>
    <svg width="12" height="12" viewBox="0 0 12 12"><circle cx="2.500" cy="3" r="1.600" fill="none" stroke="currentColor"/><path d="M8 6q3-1 3 1.500T8 12q1.500-2 1-3-1.500-1-1-3z" fill="currentColor"/></svg>
    <svg class="-ml-0.5" width="12" height="16" viewBox="0 0 12 16"><rect x="3.500" width="5" height="10" rx="2.500" fill="currentColor"/><path d="M.8 6.500a5.200 5 0 0 0 10.400 0M6 12v3M3 15.200h6" fill="none" stroke="currentColor" stroke-width="1.500"/></svg>
    <svg class="-ml-0.5" width="15" height="12" viewBox="0 0 15 12"><rect x=".7" y=".7" width="13.600" height="10.600" rx="1.500" fill="none" stroke="currentColor" stroke-width="1.400"/><path d="M2.500 3.700h10M2.500 6h10M4 8.500h7" stroke="currentColor" stroke-width="1.300" stroke-dasharray="1.500 1"/></svg>
    <svg class="-ml-1" width="15" height="15" viewBox="0 0 15 15"><path d="M4.500 0q3 2.500 6 0L15 3.500l-2 3.500-1.500-.5V15h-8V6.500L2 7 0 3.500z" fill="currentColor"/></svg>
    <svg class="-ml-1" width="14" height="14" viewBox="0 0 14 14" fill="currentColor"><rect width="6" height="6" rx="1"/><rect y="7.500" width="6" height="6" rx="1"/><rect x="7.500" y="7.500" width="6" height="6" rx="1"/><circle cx="10.500" cy="3" r="2.300" fill="none" stroke="currentColor" stroke-width="1.500"/></svg>
  </div>
</footer>

<script>
const names = ['P','Q','R','S','T','U','V','W','X','Y','Z','AA','AB','AC','AD','AE',''];
const widths = [28, ...Array(14).fill(95), 82, 92];
// Row values keyed by sheet row, one slot per column from P to AD.
const data = {
  4: 'G01,G02,G03,G05,G06,G07,G08,G09,G10,G11,G12,S3,非人防车库,人防地库,总计',
  5: ',,,,,,,,,,,,,174.2529,299.0571',
  6: ',,,,,,,,,,,,43.8594,97.0431,140.9025',
  7: ',,,,,,,,,,,,,,101.3691',
  8: ',,,,,,,,,,,554.7192,,,554.7192',
  9: '30.9299,,,,105.3386,196.9641,216.9607,194.3059,154.6527,152.1377,171.1557,,22629.3116,10813.3054,34665.0623',
  10: ',,,,,,,,,,,,83.0118,211.0819,294.0937',
  11: '21.8943,11.6775,11.6776,11.672,11.6722,12.5423,12.5422,23.894,19.1625,19.1588,23.765,39.1028,11.9505,151.1607,595.9685',
  12: ',112.3749,135.6435,,,,,,,,,,290.4175,76.6028,1851.5047',
  13: '25.6902,29.1678,27.5569,44.3708,78.334,32.5079,31.9909,35.3869,74.9493,32.1664,35.2684,11.6391,67.459,45.3057,684.9394',
  14: '38.6813,,,,,,,,,,,,,,38.6813',
  15: ',,,,,,,,,,,,341.5404,259.0041,713.8143',
  16: '87.0635,22.9008,23.104,12.5817,9.6703,25.7472,17.8264,17.519,60.4151,,,116.8211,447.413,1153.0251,2094.2836',
  17: ',,,,,,,,,,,,186.7813,33.9574,220.7387',
  18: '82.7723,54.9874,53.5871,106.3641,102.0487,82.367,80.1968,65.2143,68.5196,,,572.4999,,142.0605,2239.9478',
  19: ',,,,,,,,,,,5.7524,,,5.7524',
  20: ',,,,,,,,,,,,,78.6107,121.1081',
  21: '287.0315,231.1084,251.5691,174.9886,307.0643,350.1285,359.517,336.6353,384.8292,,,1300.5345,24101.7445,13235.4103,44621.9427'
};
document.getElementById('cols').innerHTML = widths.map(w => `<col style="width:${w}px">`).join('') + '<col>';
const th = 'border-b border-r border-b-[#9a9a9a] border-r-[#c0c0c0] bg-[#e6e6e6] p-0 pt-px text-sm leading-4 font-normal';
document.getElementById('head').innerHTML =
  '<th class="border-b border-r border-[#9a9a9a] bg-[#e6e6e6] p-0"><svg class="ml-auto mr-1" width="11" height="11" viewBox="0 0 11 11"><path d="M11 0v11H0z" fill="#b5b5b5"/></svg></th>' +
  names.map(n => n === 'T'
    ? '<th scope="col" class="border-b-2 border-r border-b-[#217346] border-r-[#c0c0c0] bg-[#d2d2d2] p-0 pt-px text-sm leading-[15px] font-normal text-[#217346]">T</th>'
    : `<th scope="col" class="${th}">${n}</th>`).join('');
let html = '';
for (let r = 3; r <= 31; r++) {
  const tall = r === 11 || r > 13;
  const cells = (data[r] || ',,,,,,,,,,,,,,').split(',');
  html += `<tr class="${tall ? 'h-[30px]' : 'h-[18px]'}">`;
  html += `<th scope="row" class="border-b border-r border-b-[#c0c0c0] border-r-[#9a9a9a] p-0 pr-[2px] align-bottom text-base leading-[15px] font-normal ${r === 15 ? 'bg-[#d2d2d2] text-[#217346]' : 'bg-[#e6e6e6]'}"><span class="block text-center">${r}</span></th>`;
  cells.forEach((v, i) => {
    const last = i === 14;
    let c = 'whitespace-nowrap p-0 ';
    if (r <= 4) c += 'border-b border-b-black bg-[#dce6f1] pl-[2px] pt-px text-left text-base leading-4 font-bold ';
    else if (r < 20) c += 'pr-[2px] text-right text-[13px] leading-[14px] ';
    else if (r === 20) c += 'border-b border-b-[#95b3d7] pr-[2px] text-right text-[13px] leading-[14px] ';
    else if (r === 21) c += 'border-b border-b-black bg-[#dce6f1] pr-[2px] pt-px text-right text-[15px] leading-4 font-bold ';
    else c += 'border-b border-r border-[#d4d4d4] ';
    if (last && r <= 21) c += 'border-r border-r-black ';
    if (r === 4 && i === 13) c += 'border-r border-r-black ';
    html += `<td class="${c}">${v}</td>`;
  });
  html += '<td class="border-b border-r border-[#d4d4d4] p-0"></td><td class="border-b border-[#d4d4d4] p-0"></td></tr>';
}
document.getElementById('grid').innerHTML = html;

document.getElementById('slicer').innerHTML = ['安防控制室','报警阀间','补风机房','采光井','车库','除尘室','储藏间','储藏室']
  .map(t => `<button class="flex h-6 shrink-0 items-center rounded-[3px] border border-[#98a2ae] bg-[#b8cce4] pb-[3px] pl-2 leading-5">${t}</button>`).join('');

document.getElementById('fields').innerHTML = [['楼栋',1],['房间',0],['做法',1],['地面积(m2)',1],['块料地面积(m2)',0],['地面周长(m)',0]]
  .map(([t, on]) => `<label class="flex h-[21px] items-center gap-1.5 pb-[3px] ${on ? 'font-bold' : ''}"><span class="grid"><input type="checkbox" ${on ? 'checked' : ''} class="peer size-[13px] appearance-none border border-[#777] bg-white [grid-area:1/1]"><svg class="hidden [grid-area:1/1] peer-checked:block" width="13" height="13" viewBox="0 0 13 13"><path d="M3 6.500l2.500 3L10 3.500" fill="none" stroke="#555" stroke-width="1.300"/></svg></span>${t}</label>`).join('') +
  '<a href="#" class="mt-[8px] block">更多表格...</a>';
</script>
</body>
</html>
